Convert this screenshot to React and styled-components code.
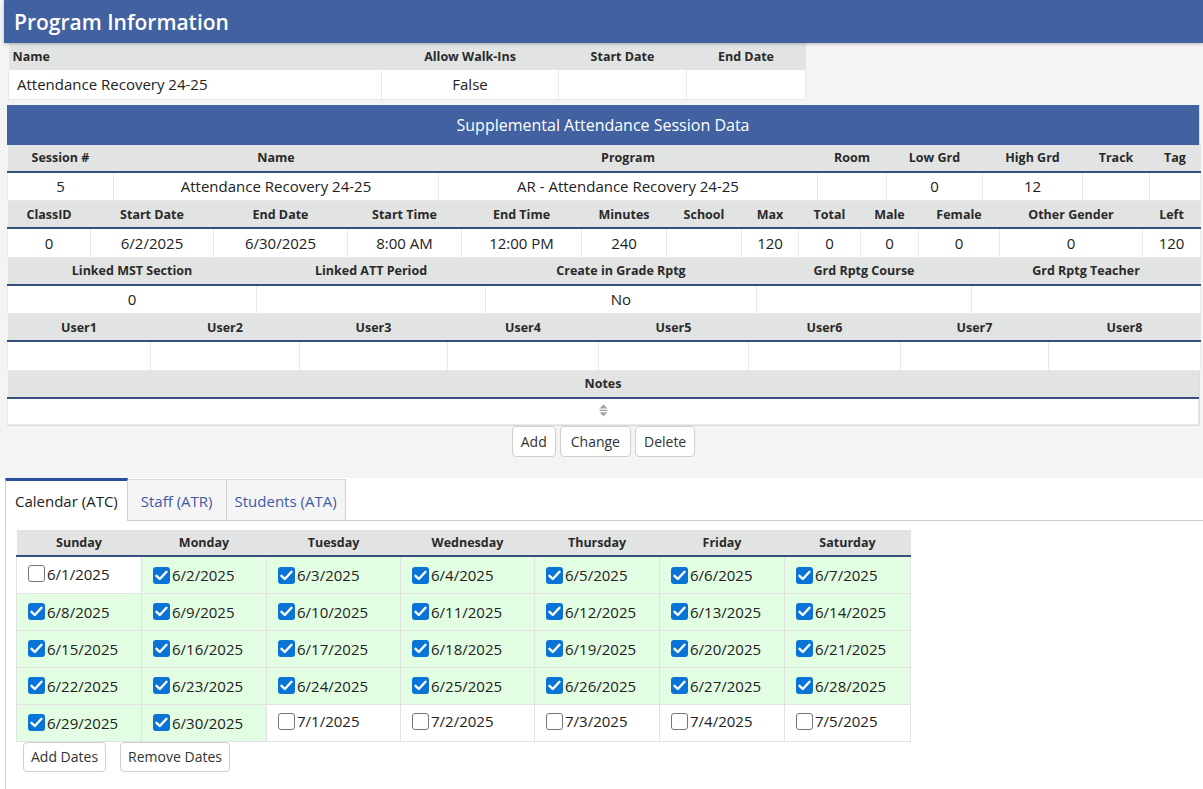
import React from 'react'
import styled, { createGlobalStyle } from 'styled-components'

const GlobalStyle = createGlobalStyle`
  html, body {
    margin: 0;
    padding: 0;
    background: #fff;
    font-family: "Open Sans", "Noto Sans", sans-serif;
    color: #222;
  }
  * { box-sizing: border-box; }
`

const Upper = styled.div`
  background: #f4f4f4;
  padding-bottom: 21px;
`

const TitleBar = styled.div`
  margin-left: 4px;
  height: 43px;
  background: #4161a1;
  color: #fff;
  font-size: 21px;
  font-weight: 600;
  display: flex;
  align-items: center;
  padding-left: 10px;
  box-shadow: 0 1px 3px rgba(0, 0, 0, 0.25);
  position: relative;
`

const Grid = styled.table`
  border-collapse: collapse;
  table-layout: fixed;
  width: ${p => p.$width}px;
  margin-left: ${p => p.$left || 0}px;
  font-size: 15px;
`

const Head = styled.th`
  background: #e2e3e3;
  height: ${p => p.$h || 27}px;
  font-size: 12.5px;
  font-weight: 700;
  color: #2a2a2a;
  text-align: ${p => p.$align || 'center'};
  padding: 0 4px;
  border-bottom: ${p => (p.$line ? '2px solid #35507d' : 'none')};
  white-space: nowrap;
`

const Cell = styled.td`
  background: #fff;
  height: ${p => p.$h || 29}px;
  text-align: ${p => p.$align || 'center'};
  padding: 0 8px;
  border: 1px solid #e6eaee;
  border-top: none;
  white-space: nowrap;
`

const Panel = styled.div`
  width: 1193px;
  margin: 5px 0 0 7px;
  border-right: 1px solid #dcdcdc;
  border-bottom: 1px solid #dcdcdc;
`

const PanelTitle = styled.div`
  height: 40px;
  background: #4161a1;
  color: #fff;
  font-size: 16px;
  display: flex;
  align-items: center;
  justify-content: center;
`

const ButtonRow = styled.div`
  display: flex;
  justify-content: ${p => p.$justify || 'center'};
  gap: ${p => p.$gap || 4}px;
  padding-left: ${p => p.$left || 0}px;
  width: ${p => (p.$width ? p.$width + 'px' : 'auto')};
  margin-left: ${p => p.$ml || 0}px;
`

const Button = styled.button`
  font-family: inherit;
  font-size: 14px;
  color: #333;
  background: #fff;
  border: 1px solid #cfcfcf;
  border-radius: 4px;
  height: ${p => p.$h || 31}px;
  padding: 0 ${p => p.$px || 9}px;
  cursor: pointer;
`

const Lower = styled.div`
  margin-left: 5px;
  border-left: 1px solid #d2d2d2;
  min-height: 311px;
`

const Tabs = styled.div`
  display: flex;
  height: 43px;
  border-bottom: 1px solid #cccccc;
  margin-left: -1px;
`

const Tab = styled.div`
  display: flex;
  align-items: center;
  padding: 0 ${p => p.$px || 8}px;
  font-size: 15px;
  color: ${p => (p.$active ? '#222' : '#3d5aa6')};
  background: ${p => (p.$active ? '#fff' : '#f5f5f5')};
  border-top: ${p => (p.$active ? '3px solid #2c4e9e' : '1px solid #d6d6d6')};
  border-right: 1px solid #d0d0d0;
  border-left: ${p => (p.$active ? '1px solid #d0d0d0' : 'none')};
  margin-top: ${p => (p.$active ? 0 : 1)}px;
  margin-bottom: ${p => (p.$active ? -1 : 0)}px;
  padding-top: ${p => (p.$active ? 0 : 2)}px;
`

const CalWrap = styled.div`
  padding: 9px 0 0 10px;
`

const DayCell = styled.td`
  height: 37px;
  padding: 0 0 0 11px;
  border: 1px solid #e2e2e2;
  background: ${p => (p.$on ? '#e3fde3' : '#fff')};
  font-size: 15px;
  white-space: nowrap;
`

const DayInner = styled.span`
  display: inline-flex;
  align-items: center;
  gap: 2px;
`

const Box = styled.span`
  width: 17px;
  height: 17px;
  border-radius: 3px;
  display: inline-flex;
  align-items: center;
  justify-content: center;
  background: ${p => (p.$on ? '#0a74d6' : '#fff')};
  border: ${p => (p.$on ? 'none' : '1px solid #767676')};
`

const ResizeIcon = () => (
  <svg width="9" height="13" viewBox="0 0 9 13">
    <polygon points="4.5,0.5 8.5,4.5 0.5,4.5" fill="#a0a0a0" />
    <rect x="0.5" y="5.8" width="8" height="1.2" fill="#a0a0a0" />
    <polygon points="0.5,8.3 8.5,8.3 4.5,12.3" fill="#a0a0a0" />
  </svg>
)

const Check = ({ on }) => (
  <Box $on={on}>
    {on && (
      <svg width="13" height="11" viewBox="0 0 13 11">
        <path d="M1.5 5.8 L4.8 9 L11.5 1.8" stroke="#fff" strokeWidth="2.4" fill="none" strokeLinecap="round" strokeLinejoin="round" />
      </svg>
    )}
  </Box>
)

const InfoBlock = ({ cols }) => (
  <Grid $width={1193}>
    <colgroup>
      {cols.map((c, i) => <col key={i} style={{ width: c[0] }} />)}
    </colgroup>
    <tbody>
      <tr>
        {cols.map((c, i) => <Head key={i} $line>{c[1]}</Head>)}
      </tr>
      <tr>
        {cols.map((c, i) => <Cell key={i}>{c[2]}</Cell>)}
      </tr>
    </tbody>
  </Grid>
)

const blocks = [
  [[106, 'Session #', '5'], [325, 'Name', 'Attendance Recovery 24-25'], [379, 'Program', 'AR - Attendance Recovery 24-25'], [69, 'Room', ''], [96, 'Low Grd', '0'], [100, 'High Grd', '12'], [67, 'Track', ''], [51, 'Tag', '']],
  [[83, 'ClassID', '0'], [123, 'Start Date', '6/2/2025'], [134, 'End Date', '6/30/2025'], [114, 'Start Time', '8:00 AM'], [120, 'End Time', '12:00 PM'], [85, 'Minutes', '240'], [75, 'School', ''], [57, 'Max', '120'], [62, 'Total', '0'], [58, 'Male', '0'], [81, 'Female', '0'], [143, 'Other Gender', '0'], [58, 'Left', '120']],
  [[249, 'Linked MST Section', '0'], [229, 'Linked ATT Period', ''], [271, 'Create in Grade Rptg', 'No'], [215, 'Grd Rptg Course', ''], [229, 'Grd Rptg Teacher', '']],
  [[143, 'User1', ''], [149, 'User2', ''], [148, 'User3', ''], [151, 'User4', ''], [150, 'User5', ''], [152, 'User6', ''], [148, 'User7', ''], [152, 'User8', '']],
]

const days = ['Sunday', 'Monday', 'Tuesday', 'Wednesday', 'Thursday', 'Friday', 'Saturday']
const dayWidths = [125, 125, 134, 134, 125, 125, 126]

const weeks = (() => {
  const all = []
  for (let d = 1; d <= 30; d++) all.push(`6/${d}/2025`)
  for (let d = 1; d <= 5; d++) all.push(`7/${d}/2025`)
  const rows = []
  for (let i = 0; i < 35; i += 7) rows.push(all.slice(i, i + 7))
  return rows
})()

const isOn = date => date.startsWith('6/') && date !== '6/1/2025'

export default function App() {
  return (
    <>
      <GlobalStyle />
      <Upper>
        <TitleBar>Program Information</TitleBar>
        <Grid $width={797} $left={8}>
          <colgroup>
            <col style={{ width: 373 }} />
            <col style={{ width: 177 }} />
            <col style={{ width: 128 }} />
            <col style={{ width: 119 }} />
          </colgroup>
          <tbody>
            <tr>
              <Head $h={27} $align="left">Name</Head>
              <Head $h={27}>Allow Walk-Ins</Head>
              <Head $h={27}>Start Date</Head>
              <Head $h={27}>End Date</Head>
            </tr>
            <tr>
              <Cell $h={29} $align="left">Attendance Recovery 24-25</Cell>
              <Cell $h={29}>False</Cell>
              <Cell $h={29}></Cell>
              <Cell $h={29}></Cell>
            </tr>
          </tbody>
        </Grid>

        <Panel>
          <PanelTitle>Supplemental Attendance Session Data</PanelTitle>
          {blocks.map((cols, i) => <InfoBlock key={i} cols={cols} />)}
          <Grid $width={1192}>
            <tbody>
              <tr><Head $line>Notes</Head></tr>
              <tr><Cell $h={27}><ResizeIcon /></Cell></tr>
            </tbody>
          </Grid>
        </Panel>
        <ButtonRow $width={1193} $ml={7}>
          <Button $px={8}>Add</Button>
          <Button $px={10}>Change</Button>
          <Button $px={8}>Delete</Button>
        </ButtonRow>
      </Upper>

      <Lower>
        <Tabs>
          <Tab $active $px={9}>Calendar (ATC)</Tab>
          <Tab $px={13}>Staff (ATR)</Tab>
          <Tab $px={8}>Students (ATA)</Tab>
        </Tabs>
        <CalWrap>
          <Grid $width={894}>
            <colgroup>
              {dayWidths.map((w, i) => <col key={i} style={{ width: w }} />)}
            </colgroup>
            <tbody>
              <tr>
                {days.map(d => <Head key={d} $h={26} $line>{d}</Head>)}
              </tr>
              {weeks.map((row, r) => (
                <tr key={r}>
                  {row.map(date => (
                    <DayCell key={date} $on={isOn(date)}>
                      <DayInner>
                        <Check on={isOn(date)} />
                        {date}
                      </DayInner>
                    </DayCell>
                  ))}
                </tr>
              ))}
            </tbody>
          </Grid>
          <ButtonRow $justify="flex-start" $gap={14} $left={7}>
            <Button $h={30} $px={7}>Add Dates</Button>
            <Button $h={30} $px={7}>Remove Dates</Button>
          </ButtonRow>
        </CalWrap>
      </Lower>
    </>
  )
}
